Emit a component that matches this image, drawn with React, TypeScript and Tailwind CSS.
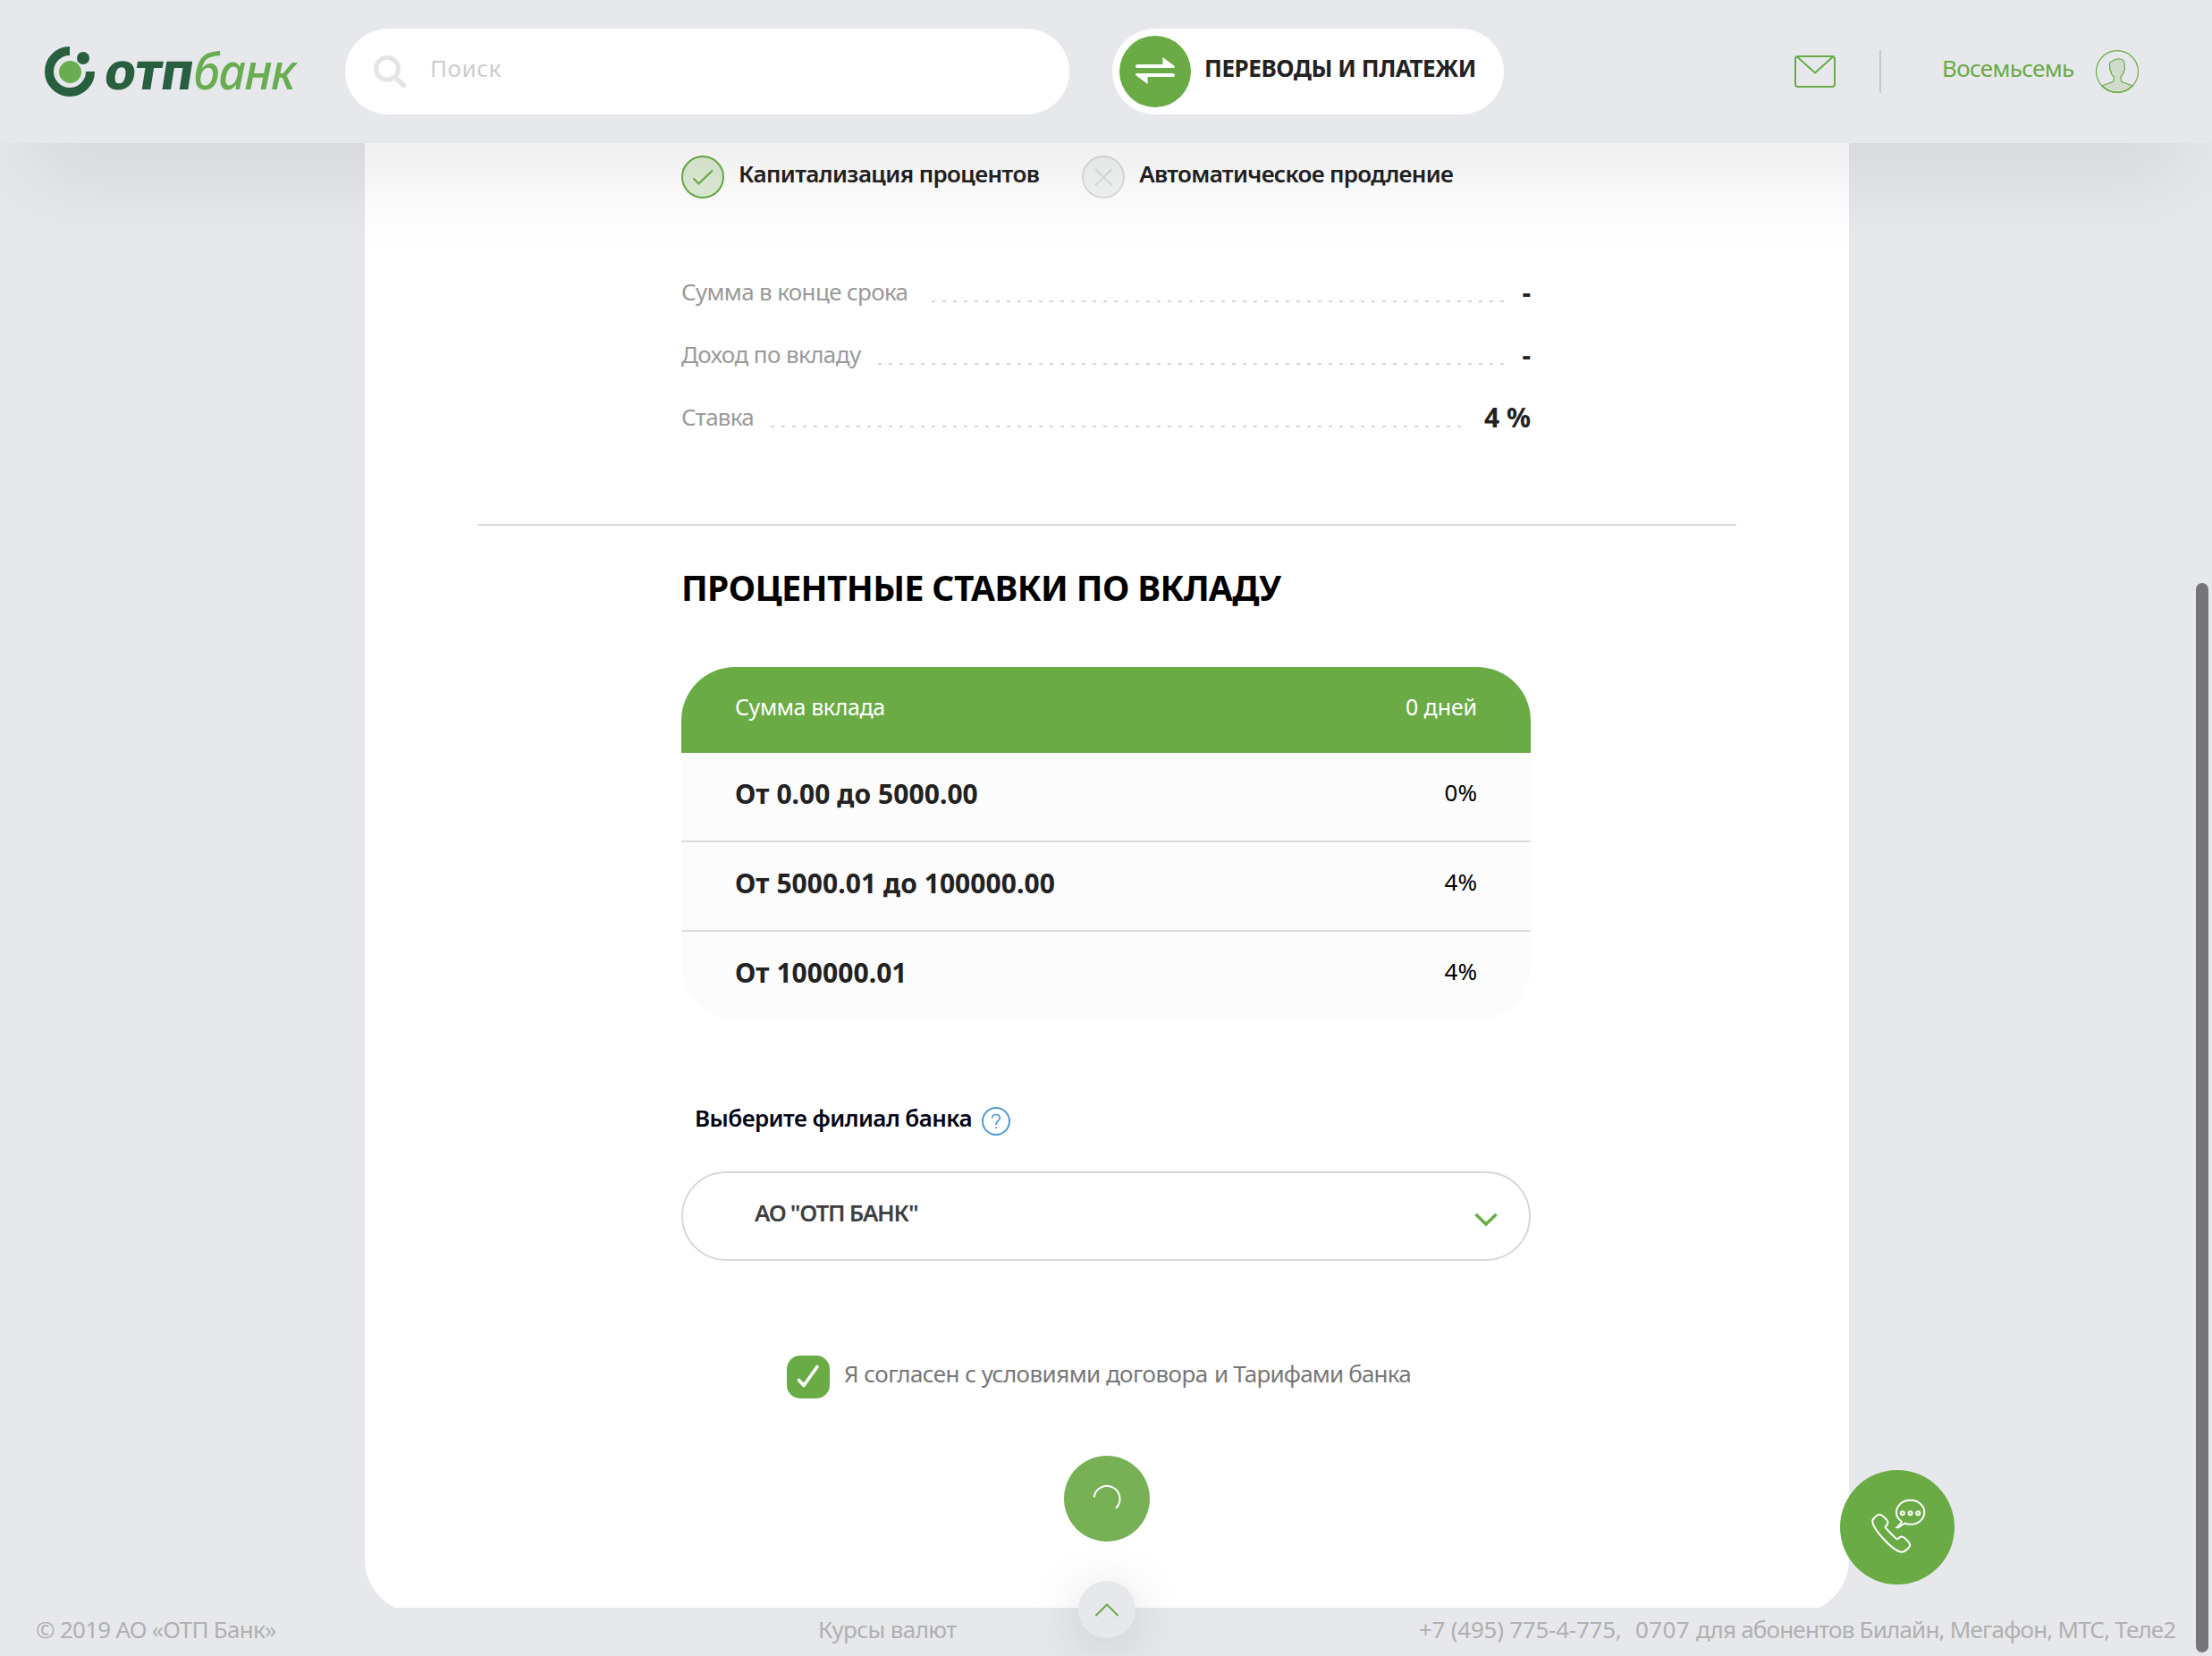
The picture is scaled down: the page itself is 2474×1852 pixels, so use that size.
import React from "react";

const conditions = [
  { label: "Капитализация процентов", on: true, tracking: "tracking-[-0.62px]" },
  { label: "Автоматическое продление", on: false, tracking: "tracking-[-0.68px]" },
];

const summary = [
  { label: "Сумма в конце срока", value: "-", labelClass: "w-[280px] tracking-[-0.66px]", valueClass: "w-[30px]" },
  { label: "Доход по вкладу", value: "-", labelClass: "w-[220px] tracking-[-0.6px]", valueClass: "w-[30px]" },
  { label: "Ставка", value: "4 %", labelClass: "w-[100px] tracking-[-0.8px]", valueClass: "w-[77px]" },
];

const rates = [
  { range: "От 0.00 до 5000.00", rate: "0%" },
  { range: "От 5000.01 до 100000.00", rate: "4%" },
  { range: "От 100000.01", rate: "4%" },
];

function Logo() {
  return (
    <div className="flex h-[56px] w-[286px] items-start">
      <svg className="h-[56px] w-[58px] shrink-0" viewBox="0 0 58 56" fill="none">
        <path d="M28 5A23 23 0 1 0 51 28" stroke="#275f3f" strokeWidth="10" />
        <circle cx="43" cy="13" r="7" fill="#275f3f" />
        <circle cx="28.5" cy="28.5" r="12.5" fill="#69ad52" />
      </svg>
      <div className="ml-[5px] flex h-[56px] whitespace-nowrap leading-[52px]">
        <span className="block w-[103px] origin-bottom-left -skew-x-[9deg] text-[57px] font-extrabold tracking-[-1px] text-[#275f3f]">отп</span>
        <span className="block origin-left scale-x-[0.96] text-[56px] font-medium italic tracking-[-1.6px] text-[#69ad52]">банк</span>
      </div>
    </div>
  );
}

function Header() {
  return (
    <header className="relative z-10 flex h-[160px] shrink-0 items-center bg-[#e7e8ec] pl-[50px] shadow-[0_64px_100px_-34px_rgba(0,0,0,0.095)]">
      <Logo />
      <div className="ml-[50px] flex h-[96px] w-[810px] items-center rounded-full bg-white pl-[32px]">
        <svg className="h-[36px] w-[36px]" viewBox="0 0 36 36" fill="none" stroke="#e5e5e5">
          <circle cx="15" cy="14.8" r="12.5" strokeWidth="5" />
          <path d="M24.5 25L33.5 33.5" strokeWidth="5.5" strokeLinecap="round" />
        </svg>
        <span className="ml-[27px] pb-[8px] leading-[32px] tracking-[0.5px] text-[#cdcdcd]">Поиск</span>
      </div>
      <div className="ml-[48px] flex h-[96px] w-[438px] items-center rounded-full bg-white pl-2">
        <svg className="h-[80px] w-[80px] shrink-0" viewBox="0 0 80 80">
          <circle cx="40" cy="40" r="40" fill="#6aab46" />
          <path d="M20 32h28.4v-8L61.5 33.8Q63 36 60 36H20a2 2 0 0 1 0-4z" fill="#fff" />
          <path d="M60 46H31.6v8L18.5 44.200Q17 42 20 42H60a2 2 0 0 1 0 4z" fill="#fff" />
        </svg>
        <span className="ml-[15px] whitespace-nowrap pb-[8px] font-bold leading-[32px] tracking-[-0.43px] text-[#222]">ПЕРЕВОДЫ И ПЛАТЕЖИ</span>
      </div>
      <svg className="ml-[325px] h-[36px] w-[46px]" viewBox="0 0 46 36" fill="none" stroke="#6aab46" strokeWidth="2">
        <rect x="1" y="1" width="44" height="34" rx="3" />
        <path d="M3 1.500L23 19.500L43 1.500" />
      </svg>
      <div className="ml-[49px] h-[48px] w-[2px] bg-[#c9cace]" />
      <span className="ml-[68px] w-[148px] whitespace-nowrap pb-[8px] leading-[32px] tracking-[-0.7px] text-[#6aab46]">Восемьсемь</span>
      <svg className="ml-[24px] h-[48px] w-[48px]" viewBox="0 0 48 48" fill="none" stroke="#6aab46">
        <path d="M7 40L19.500 35.300Q20.300 34 20.200 29.800Q17 27.500 16.700 23Q14.800 21.500 15.800 18.500Q14.500 13 18.500 12.500Q22 9.500 27 10Q33 10.300 32.200 18.500Q33.300 21.500 31.500 23Q31 27.500 28 29.800Q27.900 34 28.700 35.300L41 40A23.500 23.500 0 0 1 7 40Z" fill="#cfdccb" strokeWidth="1.200" />
        <circle cx="24" cy="24" r="23.400" strokeWidth="1.200" />
      </svg>
    </header>
  );
}

function ConditionIcon({ on }: { on: boolean }) {
  return on ? (
    <svg className="h-[48px] w-[48px] shrink-0" viewBox="0 0 48 48" fill="none" stroke="#6aab46">
      <circle cx="24" cy="24" r="23" fill="#6aab46" fillOpacity="0.22" strokeWidth="2" />
      <path d="M14 26L19.500 31.500L34.500 17" strokeWidth="2" strokeLinecap="round" strokeLinejoin="round" />
    </svg>
  ) : (
    <svg className="h-[48px] w-[48px] shrink-0" viewBox="0 0 48 48" fill="none" stroke="#dcdde0">
      <circle cx="24" cy="24" r="23" fill="#f3f5f5" strokeWidth="2" />
      <path d="M15 15L33.500 33.500M33.500 15L15 33.500" strokeWidth="1.800" />
    </svg>
  );
}

function Conditions() {
  return (
    <div className="mt-[14px] flex h-[48px] items-center gap-[48px]">
      {conditions.map((c) => (
        <div key={c.label} className="flex items-center">
          <ConditionIcon on={c.on} />
          <span className={`ml-[16px] whitespace-nowrap pb-2 font-semibold leading-[32px] text-[#222] ${c.tracking}`}>{c.label}</span>
        </div>
      ))}
    </div>
  );
}

function Summary() {
  return (
    <div className="mt-[88px] flex flex-col gap-[38px]">
      {summary.map((r) => (
        <div key={r.label} className="flex h-[32px]">
          <span className={`shrink-0 whitespace-nowrap leading-[32px] text-[#9a9a9a] ${r.labelClass}`}>{r.label}</span>
          <div className="mt-[26px] h-[2px] grow bg-[repeating-linear-gradient(90deg,#d6d6d6_0_4px,transparent_4px_12px)]" />
          <span className={`mt-[-1px] shrink-0 text-right text-[30px] font-bold leading-[36px] text-[#222] ${r.valueClass}`}>{r.value}</span>
        </div>
      ))}
    </div>
  );
}

function RatesTable() {
  return (
    <div className="mt-[65px] overflow-hidden rounded-[60px] bg-[#fcfcfc]">
      <div className="flex h-[96px] justify-between bg-[#6aab46] px-[60px] pt-[28px] text-[25px] leading-[32px] text-white">
        <span className="tracking-[-0.4px]">Сумма вклада</span>
        <span className="tracking-[-0.1px]">0 дней</span>
      </div>
      <div className="divide-y-2 divide-[#dcdcdc]">
        {rates.map((r) => (
          <div key={r.range} className="flex h-[98px] box-content justify-between px-[60px]">
            <span className="pt-[28px] text-[30px] font-bold leading-[36px] tracking-[0.05px] text-[#222]">{r.range}</span>
            <span className="pt-[28px] leading-[32px] text-black">{r.rate}</span>
          </div>
        ))}
      </div>
    </div>
  );
}

function Branch() {
  return (
    <>
      <div className="mt-[94px] flex h-[36px] pl-[15px]">
        <span className="whitespace-nowrap font-semibold leading-[32px] tracking-[-0.57px] text-[#050515]">Выберите филиал банка</span>
        <svg className="ml-[11px] mt-[4px] h-[32px] w-[32px]" viewBox="0 0 32 32" fill="none" stroke="#4a9ad2">
          <circle cx="16" cy="16" r="15" strokeWidth="2" />
          <path d="M11.700 12.500Q11.700 8.500 16 8.500Q20.300 8.500 20.300 12.300Q20.300 14.200 18 15.800Q16 17.200 16 20M16 22.300V24" strokeWidth="1.700" />
        </svg>
      </div>
      <div className="mt-[40px] flex h-[100px] items-center justify-between rounded-[50px] border-2 border-[#d8d8d8] pl-[80px] pr-[35px]">
        <span className="pb-2 font-semibold leading-[32px] tracking-[-1.3px] text-[#3f3f3f]">АО "ОТП БАНК"</span>
        <svg className="mt-[8px] h-[16px] w-[26px]" viewBox="0 0 26 16" fill="none" stroke="#6aab46" strokeWidth="3.500">
          <path d="M1.500 2L13 13L24.500 2" />
        </svg>
      </div>
    </>
  );
}

function Agreement() {
  return (
    <div className="mt-[106px] flex h-[48px] pl-[118px]">
      <svg className="h-[48px] w-[48px] shrink-0" viewBox="0 0 48 48" fill="none">
        <rect width="48" height="48" rx="15" fill="#6aab46" />
        <path d="M13.500 27.500L19 33.500L34 12.500" stroke="#fff" strokeWidth="3.600" strokeLinecap="round" strokeLinejoin="round" />
      </svg>
      <span className="ml-[16px] mt-[4px] w-[414px] whitespace-nowrap leading-[32px] tracking-[-0.55px] text-[#777]">Я согласен с условиями договора</span>
      <span className="mt-[4px] whitespace-nowrap leading-[32px] tracking-[-0.82px] text-[#777]">и Тарифами банка</span>
    </div>
  );
}

function Footer() {
  return (
    <footer className="relative z-10 flex h-[54px] shrink-0 bg-[#e7e8ec] pl-[40px] pt-[8px] leading-[32px] whitespace-nowrap text-[#b0b0b0] shadow-[0_-50px_80px_-30px_rgba(250,252,246,0.55)]">
      <span className="w-[875px] tracking-[-0.75px]">© 2019 АО «ОТП Банк»</span>
      <span className="w-[672px] tracking-[-0.6px]">Курсы валют</span>
      <span className="w-[242px] tracking-[-0.25px]">+7 (495) 775-4-775,</span>
      <span className="w-[68px] tracking-[0.4px]">0707</span>
      <span className="tracking-[-0.81px]">для абонентов Билайн, Мегафон, МТС, Теле2</span>
      <button className="absolute left-[1206px] top-[-30px] flex h-[64px] w-[64px] items-center justify-center rounded-full bg-[#e7e8ec] shadow-[0_10px_60px_rgba(0,0,0,0.15)]">
        <svg className="h-[15px] w-[28px]" viewBox="0 0 28 15" fill="none" stroke="#6aab46" strokeWidth="2">
          <path d="M1.500 14L14 1.500L26.500 14" />
        </svg>
      </button>
    </footer>
  );
}

function CallButton() {
  return (
    <button className="absolute left-[2058px] top-[1644px] z-20 h-[128px] w-[128px] rounded-full bg-[#6aab46]">
      <svg className="h-[128px] w-[128px]" viewBox="0 0 128 128" fill="none" stroke="#fff" strokeWidth="2">
        <path d="M36.300 57C36.300 54.500 41.500 49.800 44 49.800C46.800 49.800 53.500 56 53.500 59C53.500 61.500 50.500 62.500 50.500 63.800C50.500 64.800 62.800 77.300 64 77.300C65.300 77.300 66 74.500 69 74.400C71.500 74.400 78.200 81.200 78.200 84C78.200 86.500 72.200 91.800 69.300 91.800C60 91.800 36.300 66 36.300 57Z" />
        <path d="M68.800 57.500C65 55 63 51 63 47.300C63 39.700 70 33.800 78.700 33.800C87.400 33.800 94.300 39.700 94.300 47.300C94.300 55 87.400 60.800 78.700 60.800C76.400 60.800 74.200 60.300 72.300 59.500Q69 61.500 66.500 63.500Q65 64.700 63.500 64.300Q68 61 68.800 57.500Z" />
        <circle cx="69.800" cy="48.300" r="2" />
        <circle cx="78.600" cy="48.300" r="2" />
        <circle cx="87.300" cy="48.300" r="2" />
      </svg>
    </button>
  );
}

export default function App() {
  return (
    <div className="relative flex h-[1852px] w-[2474px] flex-col overflow-hidden bg-[#e7e8ec] font-['Noto_Sans','Open_Sans',sans-serif] text-[26px]">
      <Header />
      <main className="h-[1638px] shrink-0 overflow-hidden pl-[408px]">
        <section className="h-[1644px] w-[1660px] rounded-b-[60px] bg-white">
          <div className="flow-root pl-[354px] pr-[356px]">
            <Conditions />
            <Summary />
          </div>
          <hr className="mx-[126px] mt-[104px] border-t-2 border-[#dcdcdc]" />
          <div className="flow-root pl-[354px] pr-[356px]">
            <h2 className="mt-[45px] whitespace-nowrap text-[39px] font-bold leading-[48px] tracking-[-0.6px] text-black">ПРОЦЕНТНЫЕ СТАВКИ ПО ВКЛАДУ</h2>
            <RatesTable />
            <Branch />
            <Agreement />
            <svg className="ml-[428px] mt-[64px] h-[96px] w-[96px]" viewBox="0 0 96 96" fill="none">
              <circle cx="48" cy="48" r="48" fill="#78b056" />
              <path d="M33.600 46.500A14.500 14.500 0 1 1 58 58.800" stroke="#fff" strokeWidth="2" />
            </svg>
          </div>
        </section>
      </main>
      <Footer />
      <CallButton />
      <div className="absolute left-[2456px] top-[652px] z-20 h-[1196px] w-[14px] rounded-full bg-[#757577]" />
    </div>
  );
}
